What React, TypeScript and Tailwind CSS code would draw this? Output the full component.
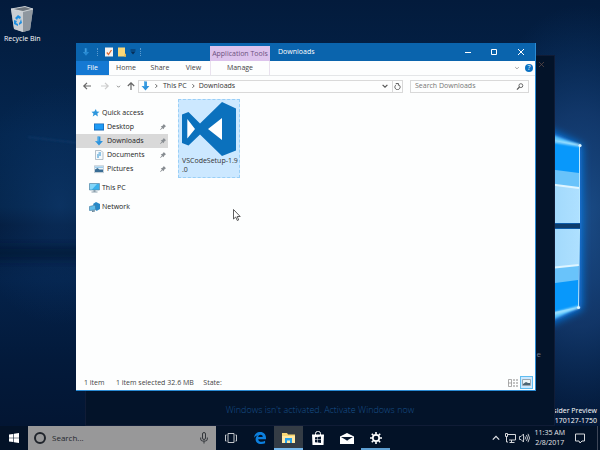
import type { ReactNode } from "react";

function Wallpaper() {
  return (
    <svg
      className="absolute inset-0 h-full w-full"
      viewBox="0 0 600 450"
      preserveAspectRatio="xMaxYMid slice"
      aria-hidden="true"
    >
      <defs>
        <linearGradient id="base" x1="0" y1="0" x2="0" y2="1">
          <stop offset="0" stopColor="#031b3c" />
          <stop offset="0.3" stopColor="#04264f" />
          <stop offset="0.46" stopColor="#042449" />
          <stop offset="0.5" stopColor="#031a3a" />
          <stop offset="0.62" stopColor="#04224a" />
          <stop offset="0.8" stopColor="#031a3b" />
          <stop offset="1" stopColor="#031430" />
        </linearGradient>
        <radialGradient id="beam" cx="0.5" cy="0.5" r="0.5">
          <stop offset="0" stopColor="#1f5696" stopOpacity="0.85" />
          <stop offset="0.5" stopColor="#173f76" stopOpacity="0.7" />
          <stop offset="1" stopColor="#0b3568" stopOpacity="0" />
        </radialGradient>
        <radialGradient id="haze" cx="0.5" cy="0.5" r="0.5">
          <stop offset="0" stopColor="#124079" stopOpacity="0.5" />
          <stop offset="1" stopColor="#0d3a70" stopOpacity="0" />
        </radialGradient>
        <linearGradient id="pane" x1="0" y1="0" x2="1" y2="0">
          <stop offset="0" stopColor="#8accf8" />
          <stop offset="0.4" stopColor="#a3dafc" />
          <stop offset="1" stopColor="#aee0ff" />
        </linearGradient>
        <filter id="soft" x="-50%" y="-50%" width="200%" height="200%">
          <feGaussianBlur stdDeviation="4" />
        </filter>
        <filter id="softer" x="-50%" y="-50%" width="200%" height="200%">
          <feGaussianBlur stdDeviation="1" />
        </filter>
      </defs>
      <rect width="600" height="450" fill="url(#base)" />
      <ellipse cx="60" cy="205" rx="90" ry="120" fill="url(#haze)" />
      <path d="M-20 246h120v14H-20z" fill="#031733" opacity="0.6" filter="url(#soft)" />
      <path d="M28 137l50 6" stroke="#1a4a80" opacity="0.6" filter="url(#softer)" />
      <ellipse cx="580" cy="220" rx="115" ry="215" fill="url(#beam)" />
      <path d="M540 125l42 20v164l-42 20z" fill="#0a7be8" filter="url(#soft)" />
      <path d="M550 134l30 11-25 5z M550 321l30-14-25-3z" fill="#5cc6ff" filter="url(#softer)" />
      <path d="M540 138l39 8v77h-39z" fill="#0898fb" />
      <path d="M540 168l39 5v50h-39z" fill="#69c3fa" />
      <path d="M540 183l39 5v35h-39z" fill="url(#pane)" />
      <path d="M540 183l39 5" stroke="#dff5ff" strokeWidth="2" />
      <path d="M540 229h39l-1 78-38 8z" fill="#0898fb" />
      <path d="M540 229h39l-1 51-38 5z" fill="#69c3fa" />
      <path d="M540 229h39v36l-39 4z" fill="url(#pane)" />
      <path d="M540 269l39-4" stroke="#dff5ff" strokeWidth="2" />
      <path d="M540 223.500h40v5h-40z" fill="#0c3c6c" />
      <path d="M579.500 146v77M579.500 229l-1 78" stroke="#b9e8ff" strokeWidth="1" />
      <path d="M552 141l28 4.500M552 314l27-7" stroke="#b5eaff" strokeWidth="2" filter="url(#softer)" />
      <circle cx="580" cy="145.500" r="1.600" fill="#dff7ff" />
      <circle cx="578.500" cy="307.500" r="1.600" fill="#dff7ff" />
    </svg>
  );
}

function RecycleBinIcon() {
  return (
    <svg className="h-7 w-6" viewBox="0 0 24 28" aria-hidden="true">
      <path d="M1 4l14-2.500L23 4l-3 21-7 2-9-3z" fill="#a9b1b9" />
      <path d="M1 4l12 2.500V27l-9-3z" fill="#c9ced3" />
      <path d="M13 6.500L23 4l-3 21-7 2z" fill="#8f979f" />
      <path d="M1 4l14-2.500L23 4l-10 2.500z" fill="#6d757d" stroke="#dfe3e6" strokeWidth="0.800" />
      <path d="M5 13l3-3 3 2-1 2-2-1-1 2zM11 14l1 4-3 2v-2l1-1zM4 15l3 1-1 2 2 1v2l-4-2z" fill="#1f8fe0" />
    </svg>
  );
}

function DownArrowIcon({ className }: { className: string }) {
  return (
    <svg className={className} viewBox="0 0 10 12" aria-hidden="true">
      <path d="M3.300 0.500h3.400v5.500h3L5 11.500.300 6h3z" fill="#2d93dc" />
      <path d="M3.300 0.500h1.400v6H1.500L.300 6h3z" fill="#59b1ea" />
    </svg>
  );
}

function Chevron({ className, d = "M2 3.500l3 3 3-3" }: { className: string; d?: string }) {
  return (
    <svg className={className} viewBox="0 0 10 10" fill="none" stroke="currentColor" strokeWidth="1.500" aria-hidden="true">
      <path d={d} />
    </svg>
  );
}

function TitleBar() {
  return (
    <header className="flex h-[18px] shrink-0 items-stretch bg-[#0a64ad] text-white">
      <div className="flex w-[134px] shrink-0 items-center pl-[2px]">
        <DownArrowIcon className="mx-1 h-2 w-2 opacity-80" />
        <span className="mx-[3px] h-2 border-l border-dotted border-[#5c9bd0]" />
        <button aria-label="Properties" className="ml-1">
          <svg className="h-[10px] w-2" viewBox="0 0 8 10">
            <path d="M0 .500h8v9H0z" fill="#f6f3ef" />
            <path d="M1.800 5.500l1.700 2 3-4.500" fill="none" stroke="#df6a32" strokeWidth="1.300" />
          </svg>
        </button>
        <button aria-label="New folder" className="ml-[5px]">
          <svg className="h-[10px] w-2" viewBox="0 0 8 10">
            <path d="M0 .500h7v6l1 1v2H0z" fill="#fbd878" />
            <path d="M7 6.500l1 1v2H6z" fill="#e8b548" />
          </svg>
        </button>
        <button aria-label="Customize toolbar" className="ml-1">
          <svg className="h-[6px] w-[6px]" viewBox="0 0 6 6">
            <path d="M.500 1h5" stroke="#062e58" />
            <path d="M.500 2.500h5L3 5.500z" fill="#062e58" />
          </svg>
        </button>
        <span className="ml-1 h-2 border-l border-dotted border-[#5c9bd0]" />
      </div>
      <div className="mt-[3px] flex w-[60px] items-center justify-center bg-[#dcc3ec] text-[#6d5280]">
        Application Tools
      </div>
      <h1 className="flex flex-1 items-center pl-2">Downloads</h1>
      <div className="flex items-center">
        <button aria-label="Minimize" className="flex w-[26px] justify-center">
          <svg className="h-[6px] w-[6px]" viewBox="0 0 6 6"><path d="M0 3.500h6" stroke="#fff" /></svg>
        </button>
        <button aria-label="Maximize" className="flex w-[26px] justify-center">
          <svg className="h-[6px] w-[6px]" viewBox="0 0 6 6"><path d="M.500.500h5v5h-5z" fill="none" stroke="#fff" /></svg>
        </button>
        <button aria-label="Close" className="flex w-[28px] justify-center">
          <svg className="h-[6px] w-[6px]" viewBox="0 0 6 6"><path d="M0 0l6 6M6 0L0 6" stroke="#fff" /></svg>
        </button>
      </div>
    </header>
  );
}

function Ribbon() {
  return (
    <div className="flex h-[15px] shrink-0 items-stretch border-b border-[#e4e6e8] text-[#444]">
      <button className="w-[33px] bg-[#1579d3] text-white">File</button>
      <button className="w-[34px]">Home</button>
      <button className="w-[34px]">Share</button>
      <button className="w-[33px]">View</button>
      <button className="w-[60px] border-x border-[#eae2ef]">Manage</button>
      <div className="ml-auto flex items-center gap-[5px] pr-[2px]">
        <button aria-label="Expand the ribbon">
          <Chevron className="h-[6px] w-[6px] text-[#999]" />
        </button>
        <button aria-label="Help" className="flex h-2 w-2 items-center justify-center rounded-full bg-[#0a72c4] text-white">
          ?
        </button>
      </div>
    </div>
  );
}

function AddressBar() {
  return (
    <div className="flex h-[20px] shrink-0 items-center px-[6px]">
      <div className="flex w-14 items-center text-[#666]">
        <button aria-label="Back">
          <Chevron className="h-2 w-[10px]" d="M10 5H1M5 1L1 5l4 4" />
        </button>
        <button aria-label="Forward" className="ml-2 text-[#ccc]">
          <Chevron className="h-2 w-[10px]" d="M0 5h9M5 1l4 4-4 4" />
        </button>
        <button aria-label="Recent locations" className="ml-[6px]">
          <Chevron className="h-[5px] w-[5px]" />
        </button>
        <button aria-label="Up" className="ml-[6px]">
          <Chevron className="h-2 w-2" d="M5 10V1M1 5l4-4 4 4" />
        </button>
      </div>
      <div className="flex h-[13px] flex-1 items-center border border-[#d9d9d9] pl-[2px] text-[#333]">
        <DownArrowIcon className="h-[10px] w-[9px]" />
        <Chevron className="mr-1 ml-[3px] h-[6px] w-[6px] text-[#555]" d="M4 2l3 3-3 3" />
        <a href="#this-pc">This PC</a>
        <Chevron className="mx-[3px] h-[6px] w-[6px] text-[#555]" d="M4 2l3 3-3 3" />
        <a href="#downloads">Downloads</a>
        <button aria-label="Previous locations" className="mr-[3px] ml-auto text-[#555]">
          <Chevron className="h-2 w-2" />
        </button>
        <button aria-label="Refresh" className="flex h-full w-[10px] items-center justify-center border-l border-[#d9d9d9]">
          <svg className="h-[7px] w-[7px]" viewBox="0 0 8 8" fill="none" stroke="#555" strokeWidth="1.100">
            <path d="M5.500 2A3 3 0 1 1 2.500 2" />
            <path d="M2 .500h3v2.500" />
          </svg>
        </button>
      </div>
      <label className="ml-[7px] flex h-[13px] w-[119px] items-center border border-[#d9d9d9] px-1">
        <input
          type="text"
          aria-label="Search Downloads"
          placeholder="Search Downloads"
          className="min-w-0 flex-1 bg-transparent outline-none placeholder:text-[#777]"
        />
        <svg className="h-[7px] w-2" viewBox="0 0 8 8" fill="none" stroke="#555">
          <circle cx="5" cy="3" r="2.200" />
          <path d="M3.400 4.600L.500 7.500" strokeWidth="1.300" />
        </svg>
      </label>
    </div>
  );
}

const pinned = [
  {
    name: "Desktop",
    icon: (
      <>
        <path d="M0 1.500h10v7H0z" fill="#1467b5" />
        <path d="M.700 2.200h8.600v5.300H.700z" fill="#1f9bf5" />
      </>
    ),
  },
  { name: "Downloads", active: true },
  {
    name: "Documents",
    icon: (
      <>
        <path d="M1.500.500h5.500l2 2v7H1.500z" fill="#f5f9fc" stroke="#9aa8b3" strokeWidth="0.700" />
        <path d="M4.500 3h2.500M3 5h4M3 7h2" stroke="#2f91d0" />
      </>
    ),
  },
  {
    name: "Pictures",
    icon: (
      <>
        <path d="M.300 1.800h9.400v6.800H.300z" fill="#edf5fa" stroke="#9aabb7" strokeWidth="0.600" />
        <path d="M1 5.500l2.500-1.500 2 1.500L9 5.500V8H1z" fill="#396d95" />
        <path d="M1 2.500h8v1.500H1z" fill="#9ecdec" />
      </>
    ),
  },
];

function PinIcon() {
  return (
    <svg className="h-[6px] w-[6px]" viewBox="0 0 8 8" aria-hidden="true">
      <path d="M5 0l3 3-1 .500L5.500 5 5 7 3.500 5.500.500 8 0 7.500 2.500 4.500 1 3l2-.500L4.500 1z" fill="#888d92" />
    </svg>
  );
}

function Sidebar() {
  return (
    <nav className="w-[92px] shrink-0 pt-[10px] text-[#222]">
      <a href="#quick-access" className="flex h-[14px] items-center gap-[2px] pl-[15px]">
        <svg className="h-2 w-[9px]" viewBox="0 0 10 10" aria-hidden="true">
          <path d="M5.500 0l1 3.200L10 3.500 7.300 5.700 8 9.500 4.800 7.300 1.500 9.500l1-3.500L0 3.500l3.500-.300z" fill="#2d96dd" />
        </svg>
        Quick access
      </a>
      {pinned.map((item) => (
        <a
          key={item.name}
          href={`#${item.name.toLowerCase()}`}
          className={`flex h-[14px] items-center gap-[3px] pr-[2px] pl-[18px] ${item.active ? "bg-[#d9d9d9]" : ""}`}
        >
          {item.icon ? (
            <svg className="h-[10px] w-[10px]" viewBox="0 0 10 10" aria-hidden="true">{item.icon}</svg>
          ) : (
            <DownArrowIcon className="h-[10px] w-[10px]" />
          )}
          <span className="flex-1">{item.name}</span>
          <PinIcon />
        </a>
      ))}
      <a href="#this-pc" className="mt-[5px] flex h-[14px] items-center gap-[2px] pl-[13px]">
        <svg className="h-[10px] w-[11px]" viewBox="0 0 11 10" aria-hidden="true">
          <path d="M.500.500h10v6.500H.500z" fill="#38b0ec" stroke="#547f9c" strokeWidth="0.600" />
          <path d="M1 1h7L3 6.500H1z" fill="#82d5f8" />
          <path d="M4.500 7h2v1.500h2v1h-6v-1h2z" fill="#8ca0ad" />
        </svg>
        This PC
      </a>
      <a href="#network" className="mt-[5px] flex h-[14px] items-center gap-[2px] pl-[13px]">
        <svg className="h-[10px] w-[11px]" viewBox="0 0 11 10" aria-hidden="true">
          <path d="M4 2l3-2 4 2v5L7.500 9z" fill="#2788c7" />
          <path d="M.500 4.500l6-1.500v5l-6 .500z" fill="#62bdea" stroke="#39779f" strokeWidth="0.600" />
          <path d="M3 8.500v1.500l3-.500v-1z" fill="#607d90" />
        </svg>
        Network
      </a>
    </nav>
  );
}

function FileTile() {
  return (
    <button className="flex w-[62px] flex-col items-center border border-dashed border-[#99cff7] bg-[#cce8ff] pt-[2px] pb-[3px] text-left text-[#333]">
      <svg className="h-[54px] w-[54px]" viewBox="0 0 54 54" aria-hidden="true">
        <path
          d="M40 0l14 6.500v42L40 54 18 32.500 6.500 43.500 0 41V12.500L6.500 10 18 21.500z"
          fill="#0b71bd"
        />
        <path d="M5.300 17v19.500L13 27zM40 16v22L26 27z" fill="#fff" />
      </svg>
      <span className="w-full pl-[3px] leading-[9px] whitespace-nowrap">
        VSCodeSetup-1.9
        <br />
        .0
      </span>
    </button>
  );
}

function StatusBar() {
  return (
    <footer className="flex h-[15px] shrink-0 items-center pr-[2px] pl-2 text-[#444]">
      <span className="w-8">1 item</span>
      <span className="mr-[2px]">1 item selected</span>
      <span className="w-9">32.6 MB</span>
      <span>State:</span>
      <button aria-label="Details view" className="ml-auto">
        <svg className="h-2 w-[10px]" viewBox="0 0 10 8" fill="none" stroke="#888">
          <path d="M.500.500h3v7h-3zM.500 4h3" strokeWidth="0.700" />
          <path d="M5 1h2M8 1h2M5 4h2M8 4h2M5 7h2M8 7h2" />
        </svg>
      </button>
      <button aria-label="Large icons view" className="ml-[2px] flex h-[13px] w-[13px] items-center justify-center border border-[#60bdf0] bg-[#cce8ff]">
        <svg className="h-[7px] w-[9px]" viewBox="0 0 9 7">
          <path d="M.500.500h8v6h-8z" fill="#eef5f8" stroke="#9aa8b1" />
          <path d="M1 5l3-2 2 1h2v2H1z" fill="#4c6474" />
        </svg>
      </button>
    </footer>
  );
}

function ExplorerWindow() {
  return (
    <main className="absolute top-[43px] right-16 bottom-[59px] left-[76px] flex flex-col border-r border-b border-[#2b8bd3] bg-[#fdfefe]">
      <TitleBar />
      <Ribbon />
      <AddressBar />
      <div className="flex min-h-0 flex-1">
        <Sidebar />
        <section className="flex-1 pt-[3px] pl-[10px]" aria-label="Files">
          <FileTile />
        </section>
      </div>
      <StatusBar />
    </main>
  );
}

function SettingsWindow() {
  return (
    <div className="absolute top-[55px] right-[45px] bottom-6 left-[85px] flex flex-col border border-[#101c36] bg-[#031329]">
      <button aria-label="Close settings" className="mt-[6px] mr-[10px] self-end">
        <svg className="h-[5px] w-[5px]" viewBox="0 0 6 6"><path d="M0 0l6 6M6 0L0 6" stroke="#66504b" strokeWidth="0.800" /></svg>
      </button>
      <span className="mt-auto mr-[13px] self-end text-[8px] text-[#6b7385]">e</span>
      <p className="mt-[45px] mb-[9px] text-center text-[9px] leading-3 font-light text-[#17508a]">
        Windows isn't activated. Activate Windows now
      </p>
    </div>
  );
}

function TaskButton({ label, state = "", children }: { label: string; state?: string; children: ReactNode }) {
  return (
    <button aria-label={label} className={`flex w-[29px] items-center justify-center border-b-2 ${state || "border-transparent"}`}>
      {children}
    </button>
  );
}

function Taskbar() {
  return (
    <footer className="absolute inset-x-0 bottom-0 flex h-6 bg-[#031227] text-[#e4e6ea]">
      <button aria-label="Start" className="flex w-7 items-center justify-center">
        <svg className="h-[10px] w-[10px]" viewBox="0 0 10 10" fill="#fff">
          <path d="M0 1.500L4.300.900v3.800H0zM4.900.800L10 0v4.700H4.900zM0 5.300h4.300v3.800L0 8.500zM4.900 5.300H10V10l-5.100-.800z" />
        </svg>
      </button>
      <label className="flex w-[188px] items-center bg-[#989899] pr-2 pl-[6px]">
        <span className="h-3 w-3 rounded-full border-2 border-[#20242b]" />
        <input
          type="text"
          aria-label="Search"
          placeholder="Search..."
          className="ml-[6px] min-w-0 flex-1 bg-transparent text-[8px] outline-none placeholder:text-[#25282e]"
        />
        <svg className="h-3 w-2" viewBox="0 0 8 12" fill="none" stroke="#33363b">
          <rect x="2.500" y="0.500" width="3" height="7" rx="1.500" />
          <path d="M.700 5.500v1.500a2 2 0 0 0 2 2h2.600a2 2 0 0 0 2-2V5.500M4 9v2.500" />
        </svg>
      </label>
      <TaskButton label="Task view">
        <svg className="mt-[2px] h-[10px] w-3" viewBox="0 0 12 10" fill="none" stroke="#c2c5ca">
          <path d="M3 .500h6v9H3zM1.500 2H.500v6h1M10.500 2h1v6h-1" />
        </svg>
      </TaskButton>
      <TaskButton label="Edge">
        <svg className="mt-[2px] h-3 w-3" viewBox="0 0 12 12">
          <path d="M0 5.800C.500 2 3 0 6.200 0 9.800 0 12 2.600 12 6v1.200H4.200c.200 1.800 1.700 2.600 3.500 2.600 1.300 0 2.400-.400 3.400-1v2.400c-1 .500-2.300.800-3.900.800-3.400 0-5.600-1.900-5.600-4.800 0-2 1.100-3.500 2.700-4.300C2.700 3.400 1 4.200 0 5.800zM4.200 5h4.500c0-1.400-.700-2.300-2.100-2.300S4.400 3.600 4.200 5z" fill="#0c80df" />
        </svg>
      </TaskButton>
      <TaskButton label="File Explorer" state="border-[#76b9ed] bg-[#343c45]">
        <svg className="mt-[2px] h-3 w-[13px]" viewBox="0 0 13 12">
          <path d="M0 1h5l1 1.500h7V11H0z" fill="#f8d775" />
          <path d="M0 4h13v7H0z" fill="#ffe9a5" />
          <path d="M3 6h7v5H8V8.500H5V11H3z" fill="#28a2e9" />
        </svg>
      </TaskButton>
      <TaskButton label="Store">
        <svg className="mt-[2px] h-[14px] w-3" viewBox="0 0 12 14">
          <path d="M3.500 4V2.500A2 2 0 0 1 5.500.500h1a2 2 0 0 1 2 2V4" fill="none" stroke="#fff" />
          <path d="M0 3.500h12L11.500 14H.500z" fill="#fff" />
          <path d="M3 6.300l2.500-.300v2.500H3zM6 6l3-.400v2.900H6zM3 9h2.500v2.500L3 11.200zM6 9h3v2.900L6 11.500z" fill="#06152b" />
        </svg>
      </TaskButton>
      <TaskButton label="Mail">
        <svg className="mt-[2px] h-[11px] w-[14px]" viewBox="0 0 14 11">
          <path d="M0 3.500L7 0l7 3.500V11H0z" fill="#fff" />
          <path d="M1 4h12L7 7.500z" fill="#06152b" />
          <path d="M5.500 6.500L9 8.500 7 7z" fill="#06152b" />
        </svg>
      </TaskButton>
      <TaskButton label="Settings" state="border-[#5e9fd2]">
        <svg className="mt-[2px] h-3 w-3" viewBox="0 0 12 12" fill="none" stroke="#fff">
          <circle cx="6" cy="6" r="3.200" strokeWidth="1.700" />
          <path d="M6 0v2M6 10v2M0 6h2M10 6h2M1.800 1.800l1.400 1.400M8.800 8.800l1.400 1.400M10.200 1.800L8.800 3.200M3.200 8.800l-1.400 1.400" strokeWidth="1.600" />
        </svg>
      </TaskButton>
      <div className="ml-auto flex items-center">
        <button aria-label="Show hidden icons">
          <Chevron className="h-2 w-2" d="M1 7l4-4 4 4" />
        </button>
        <svg className="ml-[5px] h-[10px] w-[11px]" viewBox="0 0 11 10" fill="none" stroke="#d5d7db" role="img" aria-label="Network">
          <path d="M3 1.500h7.500V7H4M6.500 7v2M4.500 9.500h5M.500.500h2v3h-2zM1.500 3.500V9H3" />
        </svg>
        <svg className="ml-[3px] h-[10px] w-[11px]" viewBox="0 0 11 10" fill="none" stroke="#d5d7db" strokeWidth="0.900" role="img" aria-label="Volume">
          <path d="M.500 3.500h1.500L4.500 1v8L2 6.500H.500zM6 3.500q1 1.500 0 3M7.500 2q2 3 0 6M9 .800q3 4.200 0 8.400" />
        </svg>
        <div className="ml-[5px] text-center whitespace-nowrap">
          <div>11:35 AM</div>
          <div>2/8/2017</div>
        </div>
        <button aria-label="Action center" className="ml-[10px]">
          <svg className="h-[11px] w-[10px]" viewBox="0 0 10 11" fill="none" stroke="#d5d7db">
            <path d="M.500 1h9v7H7L5 10 4 8H.500z" />
          </svg>
        </button>
        <span className="mr-[2px] ml-3 h-6 border-l border-[#3d4658]" />
      </div>
    </footer>
  );
}

function Cursor() {
  return (
    <svg className="absolute top-[209px] left-[233px] h-3 w-2" viewBox="0 0 8 12" aria-hidden="true">
      <path d="M.500.500v9.500l2.200-2 1.600 3.500 1.400-.600L4.200 7.500h3z" fill="#fff" stroke="#333" strokeWidth="0.800" />
    </svg>
  );
}

export default function App() {
  return (
    <div className="relative h-screen min-h-80 w-full overflow-hidden bg-[#031b3c] font-['Open_Sans','Noto_Sans',sans-serif] text-[7px] leading-[10px]">
      <Wallpaper />
      <div className="absolute top-[5px] left-1 flex flex-col items-center gap-[1px] text-white">
        <RecycleBinIcon />
        <span>Recycle Bin</span>
      </div>
      <div className="absolute right-[3px] bottom-6 text-right text-white">
        <p>Insider Preview</p>
        <p>e.170127-1750</p>
      </div>
      <SettingsWindow />
      <ExplorerWindow />
      <Taskbar />
      <Cursor />
    </div>
  );
}
